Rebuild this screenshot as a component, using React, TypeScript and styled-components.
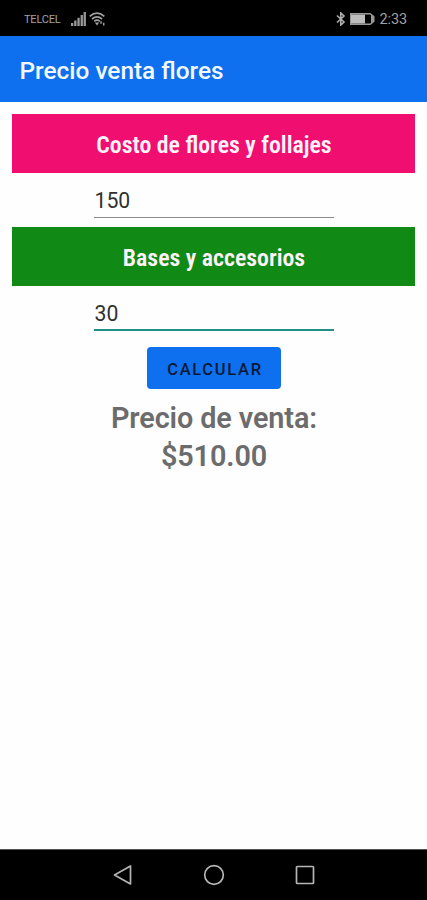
import React, { useState } from "react";
import styled, { createGlobalStyle } from "styled-components";

const GlobalStyle = createGlobalStyle`
  *, *::before, *::after { box-sizing: border-box; }
  body { margin: 0; background: #fff; font-family: Roboto, "Liberation Sans", sans-serif; }
`;

const Screen = styled.div`
  display: flex;
  flex-direction: column;
  width: 427px;
  height: 900px;
  background: #fefefe;
  overflow: hidden;
`;

const StatusBar = styled.header`
  display: flex;
  align-items: center;
  justify-content: space-between;
  height: 36px;
  padding: 1px 20px 0 24px;
  background: #000;
  color: #a2a2a2;
`;

const StatusGroup = styled.div<{ $gap: number }>`
  display: flex;
  align-items: center;
  gap: ${(p) => p.$gap}px;
  svg { display: block; }
`;

const Carrier = styled.span`
  width: 44px;
  padding-top: 1px;
  font-size: 11px;
  letter-spacing: -0.2px;
`;

const Clock = styled.span`
  padding-top: 1px;
  font-size: 14.5px;
  letter-spacing: -0.1px;
`;

const AppBar = styled.div`
  display: flex;
  align-items: center;
  height: 66px;
  padding: 3px 19.5px 0;
  background: #0e70ee;
`;

const Title = styled.h1`
  margin: 0;
  color: #f3f8ff;
  font-size: 24.4px;
  font-weight: 500;
  line-height: 32px;
  white-space: nowrap;
`;

const Content = styled.main`
  flex: 1;
  display: flex;
  flex-direction: column;
  align-items: center;
  padding: 12px 12px 0;
`;

const Banner = styled.label<{ $color: string }>`
  display: flex;
  align-items: center;
  justify-content: center;
  width: 403px;
  height: 59px;
  padding: 3px 0 0 1px;
  background: ${(p) => p.$color};
  color: #fff3fa;
`;

const BannerText = styled.span`
  font-family: "Roboto Condensed", Roboto, sans-serif;
  font-stretch: 75%;
  font-size: 23.8px;
  font-weight: 600;
  white-space: nowrap;
`;

const Field = styled.input<{ $active?: boolean }>`
  display: block;
  width: 240px;
  height: 45px;
  margin-bottom: ${(p) => (p.$active ? 16 : 9)}px;
  padding: 11px 0 0 1px;
  border: 0;
  border-bottom: ${(p) => (p.$active ? "2px solid #219085" : "1px solid #8b8b8b")};
  border-radius: 0;
  outline: 0;
  background: transparent;
  color: #303030;
  font-family: Roboto, sans-serif;
  font-size: 21.2px;
`;

const CalcButton = styled.button`
  width: 134px;
  height: 42px;
  padding: 2px 0 0 3px;
  border: 0;
  border-radius: 4px;
  background: #0e70ee;
  color: #071a35;
  font-family: Roboto, sans-serif;
  font-size: 16.5px;
  font-weight: 500;
  letter-spacing: 1.7px;
`;

const Result = styled.p`
  margin: 10px 0 0;
  padding-left: 1px;
  color: #6c6c6c;
  font-size: 28.8px;
  font-weight: 600;
  line-height: 38px;
  letter-spacing: -0.1px;
  text-align: center;
`;

const NavBar = styled.nav`
  display: flex;
  align-items: center;
  justify-content: center;
  gap: 69px;
  height: 51px;
  background: #000;
  border-top: 1px solid #555;
  svg { display: block; }
`;

const SignalIcon = () => (
  <svg width="15" height="14" viewBox="0 0 15 14" fill="#9a9a9a">
    <rect x="0" y="11" width="2.3" height="3" />
    <rect x="3.2" y="8.5" width="2.3" height="5.5" />
    <rect x="6.4" y="5.8" width="2.3" height="8.2" />
    <rect x="9.6" y="3" width="2.3" height="11" />
    <rect x="12.6" y="0" width="2.3" height="14" />
  </svg>
);

const WifiIcon = () => (
  <svg width="17" height="14" viewBox="0 0 17 14" fill="none" stroke="#a0a0a0" strokeWidth="1.7">
    <path d="M.7 4.4Q8 -2 15.3 4.4M3 7Q8 2.7 13 7M5.2 9.4Q8 7 10.8 9.4" />
    <path d="M5.8 10.4h4.4L8 13.6z" fill="#a0a0a0" stroke="none" />
    <path d="M12 9.2v2.6M14.7 10.8v2.6" strokeWidth="1.5" />
  </svg>
);

const BluetoothIcon = () => (
  <svg width="10" height="14" viewBox="0 0 10 14" fill="none" stroke="#b0b0b0" strokeWidth="1.6">
    <path d="M1 3.5 8 10 4.8 13V1L8 4 1 10.5" />
  </svg>
);

const BatteryIcon = () => (
  <svg width="25" height="12" viewBox="0 0 25 12">
    <path d="M.7 .8h19.5L23.8 3.5v5l-3.6 2.7H.7z" fill="none" stroke="#999" strokeWidth="1.4" />
    <rect x="1" y="1.5" width="14" height="9" fill="#bdbdbd" />
    <path d="M21 1.5 24 4v4l-3 2.5z" fill="#999" />
  </svg>
);

export default function App() {
  const [flowers, setFlowers] = useState("150");
  const [bases, setBases] = useState("30");
  const [price, setPrice] = useState(510);

  return (
    <>
      <GlobalStyle />
      <Screen>
        <StatusBar>
          <StatusGroup $gap={3}>
            <Carrier>TELCEL</Carrier>
            <SignalIcon />
            <WifiIcon />
          </StatusGroup>
          <StatusGroup $gap={4}>
            <BluetoothIcon />
            <BatteryIcon />
            <Clock>2:33</Clock>
          </StatusGroup>
        </StatusBar>
        <AppBar>
          <Title>Precio venta flores</Title>
        </AppBar>
        <Content>
          <Banner $color="#f00e70" htmlFor="flowers">
            <BannerText>Costo de flores y follajes</BannerText>
          </Banner>
          <Field id="flowers" value={flowers} onChange={(e) => setFlowers(e.target.value)} />
          <Banner $color="#108915" htmlFor="bases">
            <BannerText>Bases y accesorios</BannerText>
          </Banner>
          <Field id="bases" $active value={bases} onChange={(e) => setBases(e.target.value)} />
          <CalcButton onClick={() => setPrice(Number(flowers) * 3 + Number(bases) * 2)}>CALCULAR</CalcButton>
          <Result>
            Precio de venta:
            <br />${price.toFixed(2)}
          </Result>
        </Content>
        <NavBar>
          <svg width="22" height="22" viewBox="0 0 22 22" fill="none" stroke="#b5b5b5" strokeWidth="1.7">
            <path d="M2.5 11 18.5 2v18z" strokeLinejoin="round" />
          </svg>
          <svg width="22" height="22" viewBox="0 0 22 22" fill="none" stroke="#b5b5b5" strokeWidth="1.7">
            <circle cx="11" cy="11" r="9.3" />
          </svg>
          <svg width="22" height="22" viewBox="0 0 22 22" fill="none" stroke="#b5b5b5" strokeWidth="1.7">
            <rect x="2.5" y="2.5" width="17" height="17" rx="0.8" />
          </svg>
        </NavBar>
      </Screen>
    </>
  );
}
